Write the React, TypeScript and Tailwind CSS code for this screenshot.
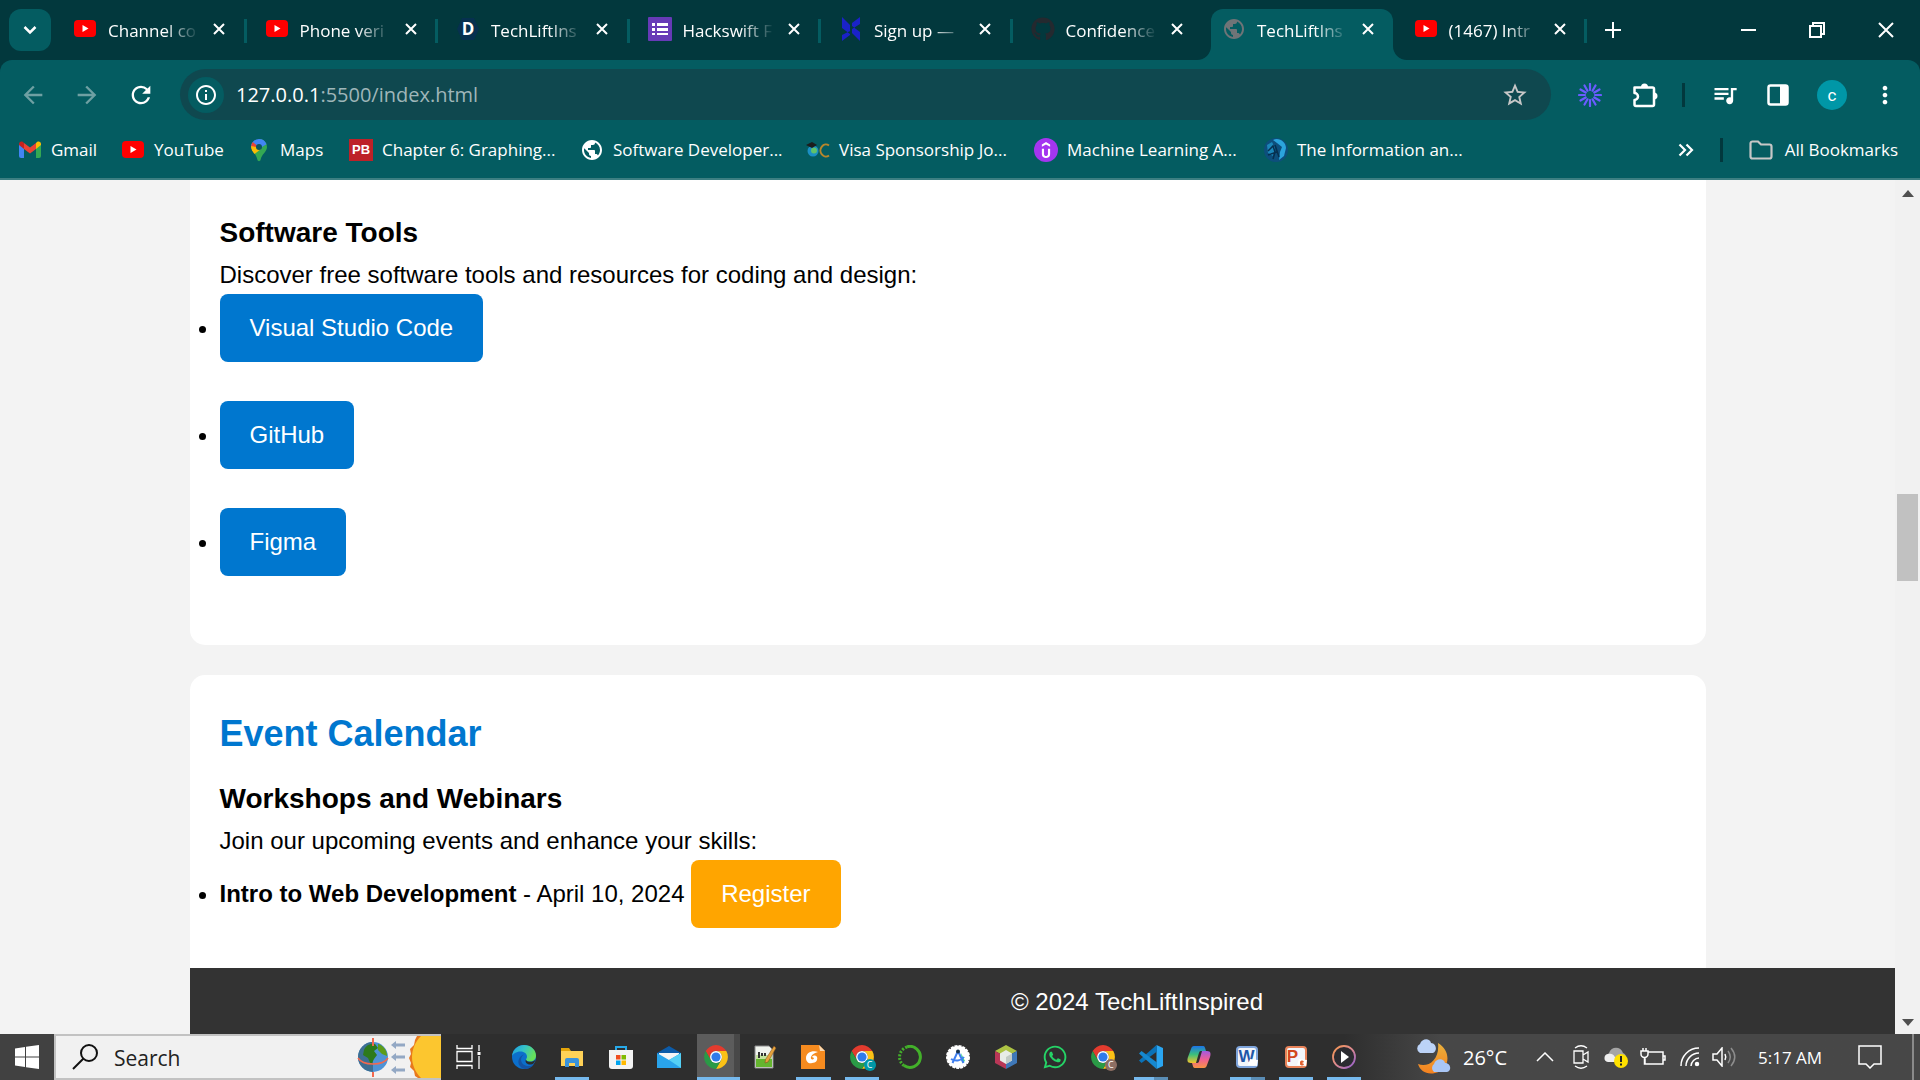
import type { ReactNode } from "react";
import { FaGithub, FaWhatsapp } from "react-icons/fa";
import {
  MdArrowBack,
  MdArrowForward,
  MdMoreVert,
  MdOutlineInfo,
  MdOutlineQueueMusic,
  MdPublic,
  MdRefresh,
  MdStarBorder,
} from "react-icons/md";
import { SiUdemy } from "react-icons/si";

/* ---------- favicons ---------- */

function YouTubeIcon() {
  return (
    <svg viewBox="0 0 24 24" className="size-6">
      <rect x="1" y="3" width="22" height="17" rx="4" fill="#f00" />
      <path d="M9.5 8v7l6-3.5z" fill="#fff" />
    </svg>
  );
}

function DevIcon() {
  return (
    <span className="flex size-6 items-center justify-center">
      <svg viewBox="0 0 24 24" className="absolute size-6">
        <path d="M6 1h12l5 11-5 11H6L1 12z" fill="#06304f" />
      </svg>
      <span className="relative text-[17px] leading-6 font-bold text-white">D</span>
    </span>
  );
}

function FormsIcon() {
  return (
    <svg viewBox="0 0 24 24" className="size-6">
      <rect width="24" height="24" rx="1" fill="#673ab7" />
      <path d="M4 6h3v3H4zM9 6h11v3H9zM4 11h3v3H4zM9 11h11v3H9zM4 16h3v2H4zM9 16h11v2H9z" fill="#fff" />
    </svg>
  );
}

function BladesIcon() {
  return (
    <svg viewBox="0 0 24 24" className="size-6">
      <path d="M3 0l8 8v9L3 11zM21 0l-8 6v6l8-5zM3 24l8-6v-4l-8 4zM13 9l8 6v9l-8-8z" fill="#1a22c8" />
    </svg>
  );
}

function GmailIcon() {
  return (
    <svg viewBox="0 0 24 24" className="size-6">
      <path d="M1 6v12a2 2 0 0 0 2 2h3V10z" fill="#4285f4" />
      <path d="M23 6v12a2 2 0 0 1-2 2h-3V10z" fill="#34a853" />
      <path d="M18 5v6l5-4V6c0-2-2-3-4-2z" fill="#fbbc04" />
      <path d="M6 5v6L1 7V6c0-2 2-3 4-2z" fill="#c5221f" />
      <path d="M6 5l6 4.500 6-4.500v6l-6 4.500L6 11z" fill="#ea4335" />
    </svg>
  );
}

function MapsIcon() {
  return (
    <svg viewBox="0 0 24 24" className="size-6">
      <path d="M12 1a8 8 0 0 1 8 8c0 5-5.500 7-6.500 13-.3 1.500-2.700 1.500-3 0C9.600 18 8 16 6.500 14z" fill="#34a853" />
      <path d="M12 1a8 8 0 0 1 7.500 5.200L6.500 14 4 9a8 8 0 0 1 8-8z" fill="#4285f4" />
      <path d="M5.800 4L10 7.500l-3.800 6C4.500 11 3 8 5.800 4z" fill="#ea4335" />
      <path d="M4.200 8L9 9l5 2-6.500 5C5 13 4 11 4.200 8z" fill="#fbbc04" />
      <circle cx="12" cy="9" r="3" fill="#0b5560" />
    </svg>
  );
}

function PbIcon() {
  return (
    <span className="flex h-[22px] w-6 items-center justify-center bg-[#bd2128] font-['Liberation_Sans'] text-[13px] leading-5 font-bold text-white">
      PB
    </span>
  );
}

function VisaIcon() {
  return (
    <svg viewBox="0 0 24 24" className="size-6">
      <circle cx="7" cy="13" r="5.500" fill="#1b8fc4" />
      <circle cx="8" cy="12.500" r="3" fill="#5fc26a" />
      <path d="M0 7l6-3 5 3-5 3z" fill="#1c1c1c" />
      <path d="M23 7.500a5.500 6 0 1 0 0 10" stroke="#b8862b" strokeWidth="2" fill="none" />
    </svg>
  );
}

function UdemyIcon() {
  return (
    <span className="flex size-6 items-center justify-center rounded-full bg-[#a435f0]">
      <SiUdemy className="size-4 text-white" />
    </span>
  );
}

function NetworkGlobeIcon() {
  return (
    <svg viewBox="0 0 24 24" className="size-6">
      <circle cx="12" cy="12" r="12" fill="#0d4f7c" />
      <path d="M9 2c6-3 13 2 13 8l-2 8-5 4 1-8 2-5-5-4z" fill="#2ba4dc" />
      <path d="M3 7l5-3 3 6-2 8-5-3z" fill="#1b86b8" />
      <path d="M4 13l5-5 2 6-2 7M11 7l4 12M4 17l9-3" stroke="#06304f" strokeWidth="1.500" fill="none" />
    </svg>
  );
}

/* ---------- browser chrome ---------- */

interface TabInfo {
  title: string;
  icon: ReactNode;
  active?: boolean;
}

const TABS: TabInfo[] = [
  { title: "Channel co", icon: <YouTubeIcon /> },
  { title: "Phone veri", icon: <YouTubeIcon /> },
  { title: "TechLiftIns", icon: <DevIcon /> },
  { title: "Hackswift F", icon: <FormsIcon /> },
  { title: "Sign up —", icon: <BladesIcon /> },
  { title: "Confidence", icon: <FaGithub className="size-6 text-[#24292f]" /> },
  { title: "TechLiftIns", icon: <MdPublic className="size-6 text-[#6f7477]" />, active: true },
  { title: "(1467) Intr", icon: <YouTubeIcon /> },
];

function CloseGlyph() {
  return (
    <svg viewBox="0 0 12 12" className="size-3" stroke="#fff" strokeWidth="2" fill="none">
      <path d="M1 1l10 10M11 1L1 11" />
    </svg>
  );
}

function Tab({ title, icon, active }: TabInfo) {
  return (
    <div className="relative flex h-[51px] items-center pb-2 pl-[18px]">
      {active && (
        <div className="absolute inset-y-0 right-[3px] left-[7px] rounded-t-xl bg-[#045c61]">
          <svg viewBox="0 0 14 14" className="absolute bottom-0 -left-[14px] size-[14px]">
            <path d="M14 0v14H0A14 14 0 0 0 14 0z" fill="#045c61" />
          </svg>
          <svg viewBox="0 0 14 14" className="absolute -right-[14px] bottom-0 size-[14px]">
            <path d="M0 0v14h14A14 14 0 0 1 0 0z" fill="#045c61" />
          </svg>
        </div>
      )}
      <span className="relative flex size-6 shrink-0 items-center justify-center pb-[3px]">{icon}</span>
      {/* titles fade out towards the close button */}
      <span className="relative ml-[11px] w-[95px] shrink-0 text-[17px] leading-6 whitespace-nowrap text-white [mask-image:linear-gradient(to_right,#000_60%,transparent_96%)]">
        {title}
      </span>
      <button
        type="button"
        aria-label="Close tab"
        className="relative ml-1 flex size-6 items-center justify-center pb-[3px]"
      >
        <CloseGlyph />
      </button>
    </div>
  );
}

function TabStrip() {
  return (
    <header className="flex h-[60px] items-start bg-[#02383d] pt-[9px]">
      <button
        type="button"
        aria-label="Search tabs"
        className="mr-1 ml-[9px] flex size-[42px] shrink-0 items-center justify-center rounded-xl bg-[#045c61]"
      >
        <svg viewBox="0 0 14 10" className="h-[10px] w-[14px]" stroke="#fff" strokeWidth="2.500" fill="none">
          <path d="M1.500 2L7 7.500 12.500 2" />
        </svg>
      </button>
      <nav className="grid max-w-[1532px] flex-1 grid-cols-8">
        {TABS.map((tab, i) => (
          <div key={i} className="relative">
            <Tab {...tab} />
            {i !== 5 && i !== 6 && (
              <div className="absolute top-[10px] right-0 h-6 w-[3px] bg-[#045c61]" />
            )}
          </div>
        ))}
      </nav>
      <button type="button" aria-label="New tab" className="flex h-[42px] w-[52px] items-center justify-center">
        <svg viewBox="0 0 16 16" className="size-4" stroke="#fff" strokeWidth="2" fill="none">
          <path d="M8 0v16M0 8h16" />
        </svg>
      </button>
      <div className="ml-auto flex h-[42px] shrink-0">
        <button type="button" aria-label="Minimize" className="flex w-[69px] items-center justify-center">
          <span className="h-[2px] w-[15px] bg-white" />
        </button>
        <button type="button" aria-label="Restore" className="flex w-[68px] items-center justify-center">
          <svg viewBox="0 0 16 16" className="size-4" stroke="#fff" strokeWidth="2" fill="none">
            <path d="M1 4h11v11H1zM4 4V1h11v11h-3" />
          </svg>
        </button>
        <button type="button" aria-label="Close" className="flex w-[69px] items-center justify-center">
          <svg viewBox="0 0 16 16" className="size-4" stroke="#fff" strokeWidth="2" fill="none">
            <path d="M1 1l14 14M15 1L1 15" />
          </svg>
        </button>
      </div>
    </header>
  );
}

function BurstIcon() {
  return (
    <svg viewBox="0 0 24 24" className="size-6" stroke="#6a5cff" strokeWidth="2.200" strokeLinecap="round">
      <path d="M12 1v6M12 17v6M1 12h6M17 12h6M6.500 2.500l3 5.200M14.500 16.300l3 5.200M17.500 2.500l-3 5.200M9.500 16.300l-3 5.200M2.500 6.500l5.200 3M16.300 14.500l5.200 3M2.500 17.500l5.200-3M16.300 9.500l5.200-3" />
    </svg>
  );
}

function PuzzleIcon() {
  return (
    <svg viewBox="0 0 26 26" className="size-[26px]">
      <path
        d="M2.500 5.500h18a1.500 1.500 0 0 1 1.500 1.500v15.500a1.500 1.500 0 0 1-1.500 1.500H4a1.500 1.500 0 0 1-1.500-1.500V18a3.500 3.500 0 0 0 0-7z"
        stroke="#fff"
        strokeWidth="2.500"
        strokeLinejoin="round"
        fill="none"
      />
      <path d="M9 5a3.500 3.500 0 0 1 7 0zM22 10.500a3.500 3.500 0 0 1 0 7z" fill="#fff" />
    </svg>
  );
}

function Toolbar() {
  return (
    <div className="flex h-[69px] items-center">
      <div className="flex w-[174px] shrink-0 pl-[6px]">
        <button type="button" aria-label="Back" className="flex w-[54px] justify-center">
          <MdArrowBack className="size-7 text-[#6fa0a3]" />
        </button>
        <button type="button" aria-label="Forward" className="flex w-[54px] justify-center">
          <MdArrowForward className="size-7 text-[#6fa0a3]" />
        </button>
        <button type="button" aria-label="Reload" className="flex w-[54px] justify-center">
          <MdRefresh className="size-7 text-white" />
        </button>
      </div>
      <div className="ml-[6px] flex h-[51px] flex-1 items-center rounded-full bg-[#0f484f] pr-[22px] pl-2">
        <button
          type="button"
          aria-label="Site information"
          className="flex size-9 items-center justify-center rounded-full bg-[#045c61]"
        >
          <MdOutlineInfo className="size-6 text-white" />
        </button>
        {/* host is brighter than the rest of the address */}
        <div className="ml-3 flex-1 text-[20px] leading-7 text-[#9fb6b9]">
          <span className="text-white">127.0.0.1</span>:5500/index.html
        </div>
        <button type="button" aria-label="Bookmark this tab">
          <MdStarBorder className="size-7 text-[#c7c7c7]" />
        </button>
      </div>
      <div className="flex w-[369px] shrink-0 items-center pl-[27px]">
        <button type="button" aria-label="Extension">
          <BurstIcon />
        </button>
        <button type="button" aria-label="Extensions" className="ml-[30px]">
          <PuzzleIcon />
        </button>
        <span className="mx-6 h-6 w-[3px] bg-[#02383d]" />
        <button type="button" aria-label="Media controls" className="ml-[2px]">
          <MdOutlineQueueMusic className="size-7 text-white" />
        </button>
        <button type="button" aria-label="Side panel" className="ml-7">
          <svg viewBox="0 0 22 22" className="size-[22px]">
            <rect x="1.500" y="1.500" width="19" height="19" rx="2" stroke="#fff" strokeWidth="2.500" fill="none" />
            <path d="M13 1h8v20h-8z" fill="#fff" />
          </svg>
        </button>
        <button
          type="button"
          className="ml-7 flex size-[30px] items-center justify-center rounded-full bg-[#0097a7] font-[Roboto] text-[17px] leading-6 text-white"
        >
          c
        </button>
        <button type="button" aria-label="Menu" className="ml-6">
          <MdMoreVert className="size-7 text-white" />
        </button>
      </div>
    </div>
  );
}

const BOOKMARKS = [
  { label: "Gmail", icon: <GmailIcon />, width: "w-[79px]" },
  { label: "YouTube", icon: <YouTubeIcon />, width: "w-[102px]" },
  { label: "Maps", icon: <MapsIcon />, width: "w-[78px]" },
  { label: "Chapter 6: Graphing...", icon: <PbIcon />, width: "w-[207px]" },
  { label: "Software Developer...", icon: <MdPublic className="size-6 text-white" />, width: "w-[202px]" },
  { label: "Visa Sponsorship Jo...", icon: <VisaIcon />, width: "w-[204px]" },
  { label: "Machine Learning A...", icon: <UdemyIcon />, width: "w-[206px]" },
  { label: "The Information an...", icon: <NetworkGlobeIcon />, width: "w-[204px]" },
];

function BookmarksBar() {
  return (
    <nav className="flex h-[51px] items-center border-b-2 border-[#3d7f82] pb-[7px] pl-[18px] text-[17px] leading-6 text-white">
      <div className="flex gap-6">
        {BOOKMARKS.map((b) => (
          <a key={b.label} href="#" className={`flex items-center gap-[9px] whitespace-nowrap ${b.width}`}>
            <span className="shrink-0">{b.icon}</span>
            {b.label}
          </a>
        ))}
      </div>
      <button type="button" aria-label="More bookmarks" className="ml-auto">
        <svg viewBox="0 0 16 14" className="h-[14px] w-4" stroke="#fff" strokeWidth="2.200" fill="none">
          <path d="M1.500 1.500L7 7l-5.500 5.500M8.500 1.500L14 7l-5.500 5.500" />
        </svg>
      </button>
      <span className="mx-[26px] h-6 w-[3px] bg-[#02383d]" />
      <a href="#" className="mr-[22px] flex items-center gap-3 whitespace-nowrap">
        <svg viewBox="0 0 24 20" className="h-5 w-6" stroke="#c7c7c7" strokeWidth="2.200" fill="none">
          <path d="M1.500 3.500a2 2 0 0 1 2-2h5.500l3 3h8.500a2 2 0 0 1 2 2v10a2 2 0 0 1-2 2h-17a2 2 0 0 1-2-2z" />
        </svg>
        All Bookmarks
      </a>
    </nav>
  );
}

/* ---------- web page ---------- */

const TOOLS = ["Visual Studio Code", "GitHub", "Figma"];

function WebPage() {
  return (
    <div className="flex min-h-0 flex-1 bg-[#f3f3f3] font-['Liberation_Sans',Arial,sans-serif] text-[24px] leading-[38px] text-black">
      <div className="flex min-w-0 flex-1 flex-col">
        <main className="min-h-0 flex-1 overflow-hidden px-[10%]">
          <section className="rounded-b-[15px] bg-white p-[30px]">
            <h3 className="text-[28px] leading-[46px] font-bold">Software Tools</h3>
            <p>Discover free software tools and resources for coding and design:</p>
            <ul className="list-disc">
              {TOOLS.map((tool) => (
                <li key={tool} className="pb-[39px]">
                  <a href="#" className="inline-block rounded-lg bg-[#0077cf] px-[30px] py-[15px] text-white">
                    {tool}
                  </a>
                </li>
              ))}
            </ul>
          </section>

          <section className="mt-[30px] rounded-[15px] bg-white p-[30px]">
            <h2 className="mb-[13px] text-[36px] leading-[58px] font-bold text-[#0077cf]">Event Calendar</h2>
            <h3 className="text-[28px] leading-[46px] font-bold">Workshops and Webinars</h3>
            <p>Join our upcoming events and enhance your skills:</p>
            <ul className="list-disc">
              <li className="pb-[39px]">
                <strong>Intro to Web Development</strong> - April 10, 2024{" "}
                <a href="#" className="inline-block rounded-lg bg-[#ffa500] px-[30px] py-[15px] text-white">
                  Register
                </a>
              </li>
            </ul>
          </section>
        </main>
        <footer className="ml-[10%] bg-[#333] pt-[15px] pb-[13px] pl-[10%] text-center text-white">
          <p>© 2024 TechLiftInspired</p>
        </footer>
      </div>

      {/* Scrollbar */}
      <div className="flex w-[25px] shrink-0 flex-col items-center bg-[#f1f1f1] pt-[10px] pb-2">
        <svg viewBox="0 0 12 7" className="h-[7px] w-3">
          <path d="M6 0l6 7H0z" fill="#505050" />
        </svg>
        <div className="flex w-full flex-1 flex-col items-center">
          <div className="flex-[295]" />
          <div className="h-[87px] w-[21px] bg-[#c1c1c1]" />
          <div className="flex-[435]" />
        </div>
        <svg viewBox="0 0 12 7" className="h-[7px] w-3">
          <path d="M0 0h12L6 7z" fill="#505050" />
        </svg>
      </div>
    </div>
  );
}

/* ---------- taskbar ---------- */

function ChromeIcon({ badge }: { badge?: "teal" | "brown" }) {
  return (
    <span className="relative">
      <svg viewBox="0 0 48 48" className="size-[26px]">
        <path d="M24 13h19.050A22 22 0 0 0 4.950 13l9.520 16.500A11 11 0 0 1 24 13z" fill="#e33b2e" />
        <path d="M24 46a22 22 0 0 0 19.050-33H24a11 11 0 0 1 9.530 16.500z" fill="#fbc116" />
        <path d="M4.950 13A22 22 0 0 0 24 46l9.530-16.500a11 11 0 0 1-19.060 0z" fill="#2a9a46" />
        <circle cx="24" cy="24" r="11" fill="#fff" />
        <circle cx="24" cy="24" r="8.500" fill="#2f7bea" />
      </svg>
      {badge && (
        <span
          className={`absolute -right-px -bottom-px flex size-3 items-center justify-center rounded-full text-[9px] leading-3 text-white ${
            badge === "teal" ? "bg-[#0097a7]" : "bg-[#8d6e63]"
          }`}
        >
          C
        </span>
      )}
    </span>
  );
}

function EdgeIcon() {
  return (
    <svg viewBox="0 0 24 24" className="size-6">
      <defs>
        <linearGradient id="edgeTop" x1="0" y1="0" x2="1" y2="0.400">
          <stop offset="0" stopColor="#1b9de2" />
          <stop offset="0.500" stopColor="#35c1c7" />
          <stop offset="1" stopColor="#66e05a" />
        </linearGradient>
      </defs>
      <circle cx="12" cy="12" r="12" fill="#0c6fcb" />
      <path d="M0 11C1 4 6 0 12 0c7 0 12 5 12 10.500 0 4-3 6-6 6-2.500 0-4-1-4-2 0-1 1-1 1-3C15 9 12.500 6.500 8.500 6.500 4 6.500 1 9 0 11z" fill="url(#edgeTop)" />
      <path d="M12 9.500c-5 3-3.500 10.500 3 11.500 3 .4 5.500-.5 7-2-2 3.500-5.500 5-9 5C8 23 5 18.500 7 14c1-2.500 3-4 5-4.500z" fill="#1453a3" />
      <path d="M14 14.500c0 1.500 2 2.300 4 2.300 2.500 0 4.500-.8 5.500-2.300-.6 3-2.500 5-4.500 5-4 .5-6.500-2.500-5-5z" fill="#2b2b2b" />
    </svg>
  );
}

function ExplorerIcon() {
  return (
    <svg viewBox="0 0 24 24" className="size-6">
      <path d="M1 3h8l2 3h-10z" fill="#e5a50a" />
      <path d="M1 6h22v15H1z" fill="#ffd257" />
      <path d="M5 22v-7a2 2 0 0 1 2-2h10a2 2 0 0 1 2 2v7h-4v-4h-6v4z" fill="#3a93dc" />
    </svg>
  );
}

function StoreIcon() {
  return (
    <svg viewBox="0 0 24 24" className="size-6">
      <path d="M7 6V2h10v4" stroke="#27a9e8" strokeWidth="2" fill="none" />
      <path d="M0 5h24v16a3 3 0 0 1-3 3H3a3 3 0 0 1-3-3z" fill="#f3f3f3" />
      <path d="M7 10h4.500v4.500H7z" fill="#f04e1f" />
      <path d="M12.500 10H17v4.500h-4.500z" fill="#7fba00" />
      <path d="M7 15.500h4.500V20H7z" fill="#00a4ef" />
      <path d="M12.500 15.500H17V20h-4.500z" fill="#ffb900" />
    </svg>
  );
}

function MailIcon() {
  return (
    <svg viewBox="0 0 24 24" className="size-6">
      <path d="M0 8l12-7 12 7v3H0z" fill="#0c5ba8" />
      <path d="M2 8h20v8H2z" fill="#f5f5f5" />
      <path d="M0 8l12 7 12-7v15H0z" fill="#29a3ea" />
      <path d="M24 8v15L12 15z" fill="#54d0f5" />
    </svg>
  );
}

function NotepadIcon() {
  return (
    <svg viewBox="0 0 24 24" className="size-6">
      <path d="M2 1h14l4 4v18H2z" fill="#f0f3ee" stroke="#8a8a8a" />
      <path d="M3 14h16v8H3z" fill="#65b52f" />
      <path d="M3 10h16v4H3z" fill="#c3e39b" />
      <path d="M5 7h2v6H5zM8 8h2v3H8zM11 8h2v3h-2z" fill="#333" />
      <path d="M21 1l2 2-8 14-3 1 .5-3.500z" fill="#e5a23c" stroke="#7a4b1c" strokeWidth="0.500" />
    </svg>
  );
}

function FoxitIcon() {
  return (
    <svg viewBox="0 0 24 24" className="size-6">
      <path d="M0 0h18l6 6v18H0z" fill="#f68b1f" />
      <path d="M18 0l6 6h-5z" fill="#fbd9b0" />
      <path d="M17 7c-6-2-12 1-12 6 0 4 3 6 6 5 4 0 6-3 5-6-1-2-4-2-5 0l2 1c-1 3-4 1-3-1 1-3 4-4 7-5z" fill="#fff" />
    </svg>
  );
}

function RingIcon() {
  return (
    <svg viewBox="0 0 24 24" className="size-6" fill="none" stroke="#43b02a">
      <path d="M9 1.800A10.500 10.500 0 1 1 6 20.600" strokeWidth="3" />
      <path d="M9 2A10.500 10.500 0 0 0 6 20.600" strokeWidth="3" strokeDasharray="2 1.500" />
    </svg>
  );
}

function AndroidStudioIcon() {
  return (
    <svg viewBox="0 0 24 24" className="size-6">
      <circle cx="12" cy="12" r="11" fill="#fff" stroke="#fff" strokeWidth="2" strokeDasharray="3 1" />
      <path d="M15 8l4 8-3 2z" fill="#3ddc84" />
      <path d="M12 6L6.500 18M12 6l5.500 12M5 14c4 2.500 10 2 13-2" stroke="#3f7ff0" strokeWidth="2" fill="none" />
      <circle cx="12" cy="6.500" r="2" fill="#17324d" />
    </svg>
  );
}

function NetBeansIcon() {
  return (
    <svg viewBox="0 0 24 24" className="size-6">
      <path d="M12 0l11 6-11 6L1 6z" fill="#adc344" />
      <path d="M1 6l11 6v12L1 18z" fill="#b93757" />
      <path d="M23 6l-11 6v12l11-6z" fill="#3f78b8" />
      <path d="M12 5l6 3.500v7L12 19l-6-3.500v-7z" fill="#e8ede8" />
      <path d="M12 12l6-3.500v7L12 19z" fill="#c2cbc6" />
    </svg>
  );
}

function VsCodeIcon() {
  return (
    <svg viewBox="0 0 24 24" className="size-6">
      <path d="M17.500 0L24 3v18l-6.500 3z" fill="#2aa6f2" />
      <path d="M17.500 0L0 15.500 2.500 18 18 6.500z" fill="#0a72b8" />
      <path d="M17.500 24L0 8.500 2.500 6 18 17.500z" fill="#1688cf" />
    </svg>
  );
}

function CopilotIcon() {
  return (
    <svg viewBox="0 0 24 24" className="size-6">
      <defs>
        <linearGradient id="copLeft" x1="0" y1="0" x2="0" y2="1">
          <stop offset="0" stopColor="#1b74e8" />
          <stop offset="0.500" stopColor="#3cc07c" />
          <stop offset="1" stopColor="#f5c52a" />
        </linearGradient>
        <linearGradient id="copRight" x1="0" y1="0" x2="0" y2="1">
          <stop offset="0" stopColor="#a35ae0" />
          <stop offset="0.500" stopColor="#ee5f93" />
          <stop offset="1" stopColor="#f79443" />
        </linearGradient>
      </defs>
      <path d="M7 1h9c2 0 2 2 3 5h-5c-2 0-2 2-3 5l-2 7H4c-4 0-4-3-3-6l3-8c.5-2 1.500-3 3-3z" fill="url(#copLeft)" />
      <path d="M17 23H8c-2 0-2-2-3-5h5c2 0 2-2 3-5l2-7h5c4 0 4 3 3 6l-3 8c-.5 2-1.500 3-3 3z" fill="url(#copRight)" />
    </svg>
  );
}

function OfficeIcon({ letter }: { letter: "W" | "P" }) {
  const word = letter === "W";
  return (
    <span
      className={`relative flex size-[22px] items-center rounded-sm border-2 bg-[#f3f6fb] font-['Liberation_Sans'] text-[17px] leading-6 font-bold ${
        word ? "border-[#7fa5dc] text-[#1f57a8]" : "border-[#e8835a] text-[#d2471c]"
      }`}
    >
      {letter}
      <svg viewBox="0 0 10 8" className="absolute -right-[2px] bottom-0 h-2 w-[10px]">
        <path d="M2 1l8 1-1 6-9-1z" fill="#fff" />
        {!word && <path d="M3 5a2 2 0 0 1 4-1l-2 1 2 1a2 2 0 0 1-4-1z" fill="#e0602f" />}
      </svg>
    </span>
  );
}

function MediaIcon() {
  return (
    <svg viewBox="0 0 24 24" className="size-6">
      <defs>
        <linearGradient id="mediaRing" x1="0" y1="0" x2="1" y2="1">
          <stop offset="0" stopColor="#f5964e" />
          <stop offset="0.500" stopColor="#dd8a90" />
          <stop offset="1" stopColor="#8d5cd0" />
        </linearGradient>
      </defs>
      <circle cx="12" cy="12" r="11" fill="#2b2b30" stroke="url(#mediaRing)" strokeWidth="1.800" />
      <path d="M9 6l8 6-8 6z" fill="#fff" />
    </svg>
  );
}

type Running = "one" | "many" | "active";

const APPS: { name: string; icon: ReactNode; running?: Running }[] = [
  { name: "Edge", icon: <EdgeIcon /> },
  { name: "File Explorer", icon: <ExplorerIcon />, running: "one" },
  { name: "Store", icon: <StoreIcon /> },
  { name: "Mail", icon: <MailIcon /> },
  { name: "Chrome", icon: <ChromeIcon />, running: "active" },
  { name: "Notepad++", icon: <NotepadIcon /> },
  { name: "Foxit", icon: <FoxitIcon />, running: "one" },
  { name: "Chrome profile", icon: <ChromeIcon badge="teal" />, running: "one" },
  { name: "Anaconda", icon: <RingIcon /> },
  { name: "Android Studio", icon: <AndroidStudioIcon /> },
  { name: "NetBeans", icon: <NetBeansIcon /> },
  { name: "WhatsApp", icon: <FaWhatsapp className="size-[26px] text-[#25d366]" /> },
  { name: "Chrome second profile", icon: <ChromeIcon badge="brown" /> },
  { name: "Visual Studio Code", icon: <VsCodeIcon />, running: "many" },
  { name: "Copilot", icon: <CopilotIcon /> },
  { name: "Word", icon: <OfficeIcon letter="W" />, running: "many" },
  { name: "PowerPoint", icon: <OfficeIcon letter="P" />, running: "one" },
  { name: "Media Player", icon: <MediaIcon />, running: "one" },
];

function SearchArt() {
  return (
    <svg viewBox="0 0 84 42" className="h-[42px] w-[84px]">
      <circle cx="16" cy="21" r="15" fill="#4f93d6" />
      <path d="M16 6a15 15 0 0 0 0 30z" fill="#3d6f93" />
      <path d="M7 14c2-5 7-7 11-6l3 4-4 3 3 4-3 4-3 6-3-7-5-3z" fill="#2d7a1c" />
      <path d="M21 8c5 1 9 6 9 12l-5-2-4-4z" fill="#5d9c1a" />
      <path d="M1 22c5 8 25 8 30 0" stroke="#f2694f" strokeWidth="1.500" fill="none" />
      <path d="M16 2v8M16 36v5" stroke="#f2694f" strokeWidth="2" />
      <path
        d="M34 9l5-4v2.500h9v3h-9V13zM34 21l5-4v2.500h9v3h-9V25zM34 34l5-4v2.500h9v3h-9V38z"
        fill="#93a8c4"
      />
      <path d="M84 0H60l-2 4-1 5-4 4 1 5-2 4 2 5-1 4 4 4 1 5 3 2h23z" fill="#e8791d" />
      <path d="M84 0H64c-12 12-12 30 0 42h20z" fill="#fcc62f" />
    </svg>
  );
}

function Tray() {
  return (
    <div className="flex h-full shrink-0 items-center text-white">
      <svg viewBox="0 0 36 36" className="size-9">
        <defs>
          <linearGradient id="moon" x1="0" y1="0" x2="0" y2="1">
            <stop offset="0" stopColor="#e9b13c" />
            <stop offset="1" stopColor="#f5811f" />
          </linearGradient>
        </defs>
        <path d="M23 4c14 8 12 27-3 30C12 36 5 32 3 25c10 4 22-4 20-21z" fill="url(#moon)" />
        <path d="M5 14a5 5 0 0 1 0-9c2-6 10-6 11-1 5 0 7 8 2 10z" fill="#bcd3f7" />
        <path d="M19 33a5 5 0 0 1 0-8c2-6 10-6 11-1 6 0 7 8 2 9z" fill="#a9c6f5" />
      </svg>
      <span className="ml-3 w-[47px] pt-[2px] text-[20px] leading-7">26°C</span>
      <svg viewBox="0 0 18 10" className="ml-[26px] h-[10px] w-[18px]" stroke="#fff" strokeWidth="1.500" fill="none">
        <path d="M1 9l8-8 8 8" />
      </svg>
      <svg viewBox="0 0 18 24" className="ml-[18px] h-6 w-[18px]" stroke="#fff" strokeWidth="1.300" fill="none">
        <path d="M2 6h9v12H2zM11 10l5-3v10l-5-3M3 3c4-3 8-3 12 0M3 21c4 3 8 3 12 0" />
      </svg>
      <svg viewBox="0 0 24 22" className="ml-[14px] h-[22px] w-6">
        <path d="M5 16a5 5 0 0 1 0-9c2-7 12-7 14 0 4 1 4 8 0 9z" fill="#a5a5a5" />
        <path d="M4 16a4 4 0 0 1 1-8c5-1 6 4 9 8z" fill="#eee" />
        <circle cx="17" cy="15" r="7" fill="#ffe100" />
        <path d="M17 10v6M17 17.500v2" stroke="#222" strokeWidth="2" />
      </svg>
      <svg viewBox="0 0 26 20" className="ml-3 h-5 w-[26px]" stroke="#fff" strokeWidth="1.500" fill="none">
        <path d="M8 5h15v12H5v-6M23 9h2v4h-2M3 1v3M6 1v3M1 4h7v3a3 3 0 0 1-7 0zM4.500 10v7H8" />
      </svg>
      <svg viewBox="0 0 20 20" className="ml-[14px] size-5" stroke="#fff" strokeWidth="1.500" fill="none">
        <path d="M1 19C1 9 9 1 19 1M6 19c0-7 6-13 13-13M11 19c0-4 4-8 8-8" />
        <circle cx="17" cy="17" r="1.500" fill="#fff" />
      </svg>
      <svg viewBox="0 0 24 20" className="ml-3 h-5 w-6" stroke="#fff" strokeWidth="1.500" fill="none">
        <path d="M1 7h4l5-6v18l-5-6H1z" />
        <path d="M13 7c1 2 1 4 0 6" />
        <path d="M16 4c3 4 3 8 0 12M19 1c5 6 5 12 0 18" stroke="#8d8d8d" />
      </svg>
      <time className="ml-[22px] w-[70px] pt-px text-[17px] leading-6 whitespace-nowrap">5:17 AM</time>
      <button type="button" aria-label="Notifications" className="ml-[30px]">
        <svg viewBox="0 0 24 24" className="size-6" stroke="#fff" strokeWidth="1.500" fill="none">
          <path d="M1 1h22v18h-7l-4 4-4-4H1z" />
        </svg>
      </button>
      <span className="mr-[6px] ml-[30px] h-full w-[2px] bg-[#8a8a8a]" />
    </div>
  );
}

function Taskbar() {
  return (
    <footer className="flex h-[46px] shrink-0 items-center bg-linear-to-r from-[#2e2e2e] from-70% to-[#474747] to-75%">
      <button type="button" aria-label="Start" className="flex h-full w-[54px] shrink-0 items-center justify-center bg-[#414141]">
        <svg viewBox="0 0 24 24" className="size-6" fill="#fff">
          <path d="M0 3.500L10 2v9.500H0zM11 1.800L24 0v11.500H11zM0 12.500h10V22L0 20.500zM11 12.500h13V24l-13-1.800z" />
        </svg>
      </button>
      <label className="flex h-full w-[387px] shrink-0 items-center border-2 border-r-0 border-[#c2c2c2] bg-[#f1f1f1] pl-4">
        <svg viewBox="0 0 26 26" className="size-[26px] shrink-0" stroke="#111" strokeWidth="2" fill="none">
          <circle cx="17" cy="9" r="8" />
          <path d="M11.500 14.500L1 25" />
        </svg>
        <input
          type="text"
          placeholder="Search"
          className="ml-4 min-w-0 flex-1 bg-transparent pt-[2px] text-[21px] leading-7 placeholder:text-[#222] placeholder:opacity-100"
        />
        <SearchArt />
      </label>
      <button type="button" aria-label="Task view" className="flex h-full w-[59px] shrink-0 items-center pl-[15px]">
        <svg viewBox="0 0 25 24" className="h-6 w-[25px]" stroke="#fff" strokeWidth="1.300" fill="none">
          <path d="M1 6.500h15v10H1zM1 0v3.500h15V0M1 24v-3.500h15V24M23 0v6M23 11v13" />
          <path d="M21.500 7h3v3h-3z" fill="#fff" stroke="none" />
        </svg>
      </button>
      <div className="grid h-full w-[868px] shrink-0 grid-cols-18">
        {APPS.map((app) => (
          <button
            key={app.name}
            type="button"
            aria-label={app.name}
            className={`relative flex items-center justify-center ${
              app.running === "active" ? "mr-px ml-1 bg-linear-to-r from-[#5c5c5c] from-86% to-[#484848] to-86% pr-1" : ""
            }`}
          >
            {app.icon}
            {app.running === "active" && <span className="absolute inset-x-0 bottom-0 h-[3px] bg-[#76b9ed]" />}
            {app.running === "one" && <span className="absolute inset-x-[7px] bottom-0 h-[3px] bg-[#76b9ed]" />}
            {app.running === "many" && (
              <span className="absolute inset-x-[7px] bottom-0 h-[3px] bg-linear-to-r from-[#76b9ed] from-60% to-[#5a8db5] to-60%" />
            )}
          </button>
        ))}
      </div>
      <div className="ml-auto h-full">
        <Tray />
      </div>
    </footer>
  );
}

export default function App() {
  return (
    <div className="flex h-screen flex-col overflow-hidden font-['Open_Sans','Noto_Sans',sans-serif]">
      <div className="shrink-0 bg-[#02383d]">
        <TabStrip />
        <div className="rounded-t-xl bg-[#045c61]">
          <Toolbar />
          <BookmarksBar />
        </div>
      </div>
      <WebPage />
      <Taskbar />
    </div>
  );
}
